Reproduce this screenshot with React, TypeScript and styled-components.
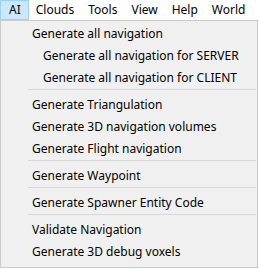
import React from "react";
import styled, { createGlobalStyle } from "styled-components";

const Global = createGlobalStyle`
  html, body { margin: 0; padding: 0; background: #ffffff; }
  body { font-family: "Segoe UI", "Noto Sans", "Open Sans", sans-serif; font-size: 12px; color: #000; }
`;

const Page = styled.div`
  width: 259px;
  height: 269px;
  background: #ffffff;
  overflow: hidden;
`;

const MenuBar = styled.div`
  display: flex;
  align-items: flex-start;
  height: 20px;
`;

const BarItem = styled.div<{ $active?: boolean }>`
  box-sizing: border-box;
  height: 20px;
  line-height: 18px;
  padding: 0 6px;
  border: 1px solid ${(p) => (p.$active ? "#99d1ff" : "transparent")};
  background: ${(p) => (p.$active ? "#cce8ff" : "transparent")};
  color: #000;
  white-space: nowrap;
  &:first-child {
    padding: 0 7px 0 8px;
  }
`;

const Popup = styled.div`
  box-sizing: border-box;
  width: 258px;
  border: 1px solid #cccccc;
  background: #f0f0f0;
  padding: 0 2px 6px 2px;
  display: flex;
  flex-direction: column;
`;

const Item = styled.div<{ $level?: number }>`
  box-sizing: border-box;
  height: 22px;
  padding-top: 3px;
  line-height: 20px;
  padding-left: ${(p) => 29 + (p.$level ?? 0) * 11}px;
  color: #000;
  white-space: nowrap;
`;

const Separator = styled.div`
  height: 1px;
  background: #d7d7d7;
  margin: 2px -1px 2px 25px;
`;

type Entry = { label: string; level?: number } | "sep";

const entries: Entry[] = [
  { label: "Generate all navigation" },
  { label: "Generate all navigation for SERVER", level: 1 },
  { label: "Generate all navigation for CLIENT", level: 1 },
  "sep",
  { label: "Generate Triangulation" },
  { label: "Generate 3D navigation volumes" },
  { label: "Generate Flight navigation" },
  "sep",
  { label: "Generate Waypoint" },
  "sep",
  { label: "Generate Spawner Entity Code" },
  "sep",
  { label: "Validate Navigation" },
  { label: "Generate 3D debug voxels" },
];

const menus = ["AI", "Clouds", "Tools", "View", "Help", "World"];

export default function App() {
  return (
    <Page>
      <Global />
      <MenuBar>
        {menus.map((m, i) => (
          <BarItem key={m} $active={i === 0}>
            {m}
          </BarItem>
        ))}
      </MenuBar>
      <Popup>
        {entries.map((e, i) =>
          e === "sep" ? (
            <Separator key={i} />
          ) : (
            <Item key={i} $level={e.level}>
              {e.label}
            </Item>
          )
        )}
      </Popup>
    </Page>
  );
}
